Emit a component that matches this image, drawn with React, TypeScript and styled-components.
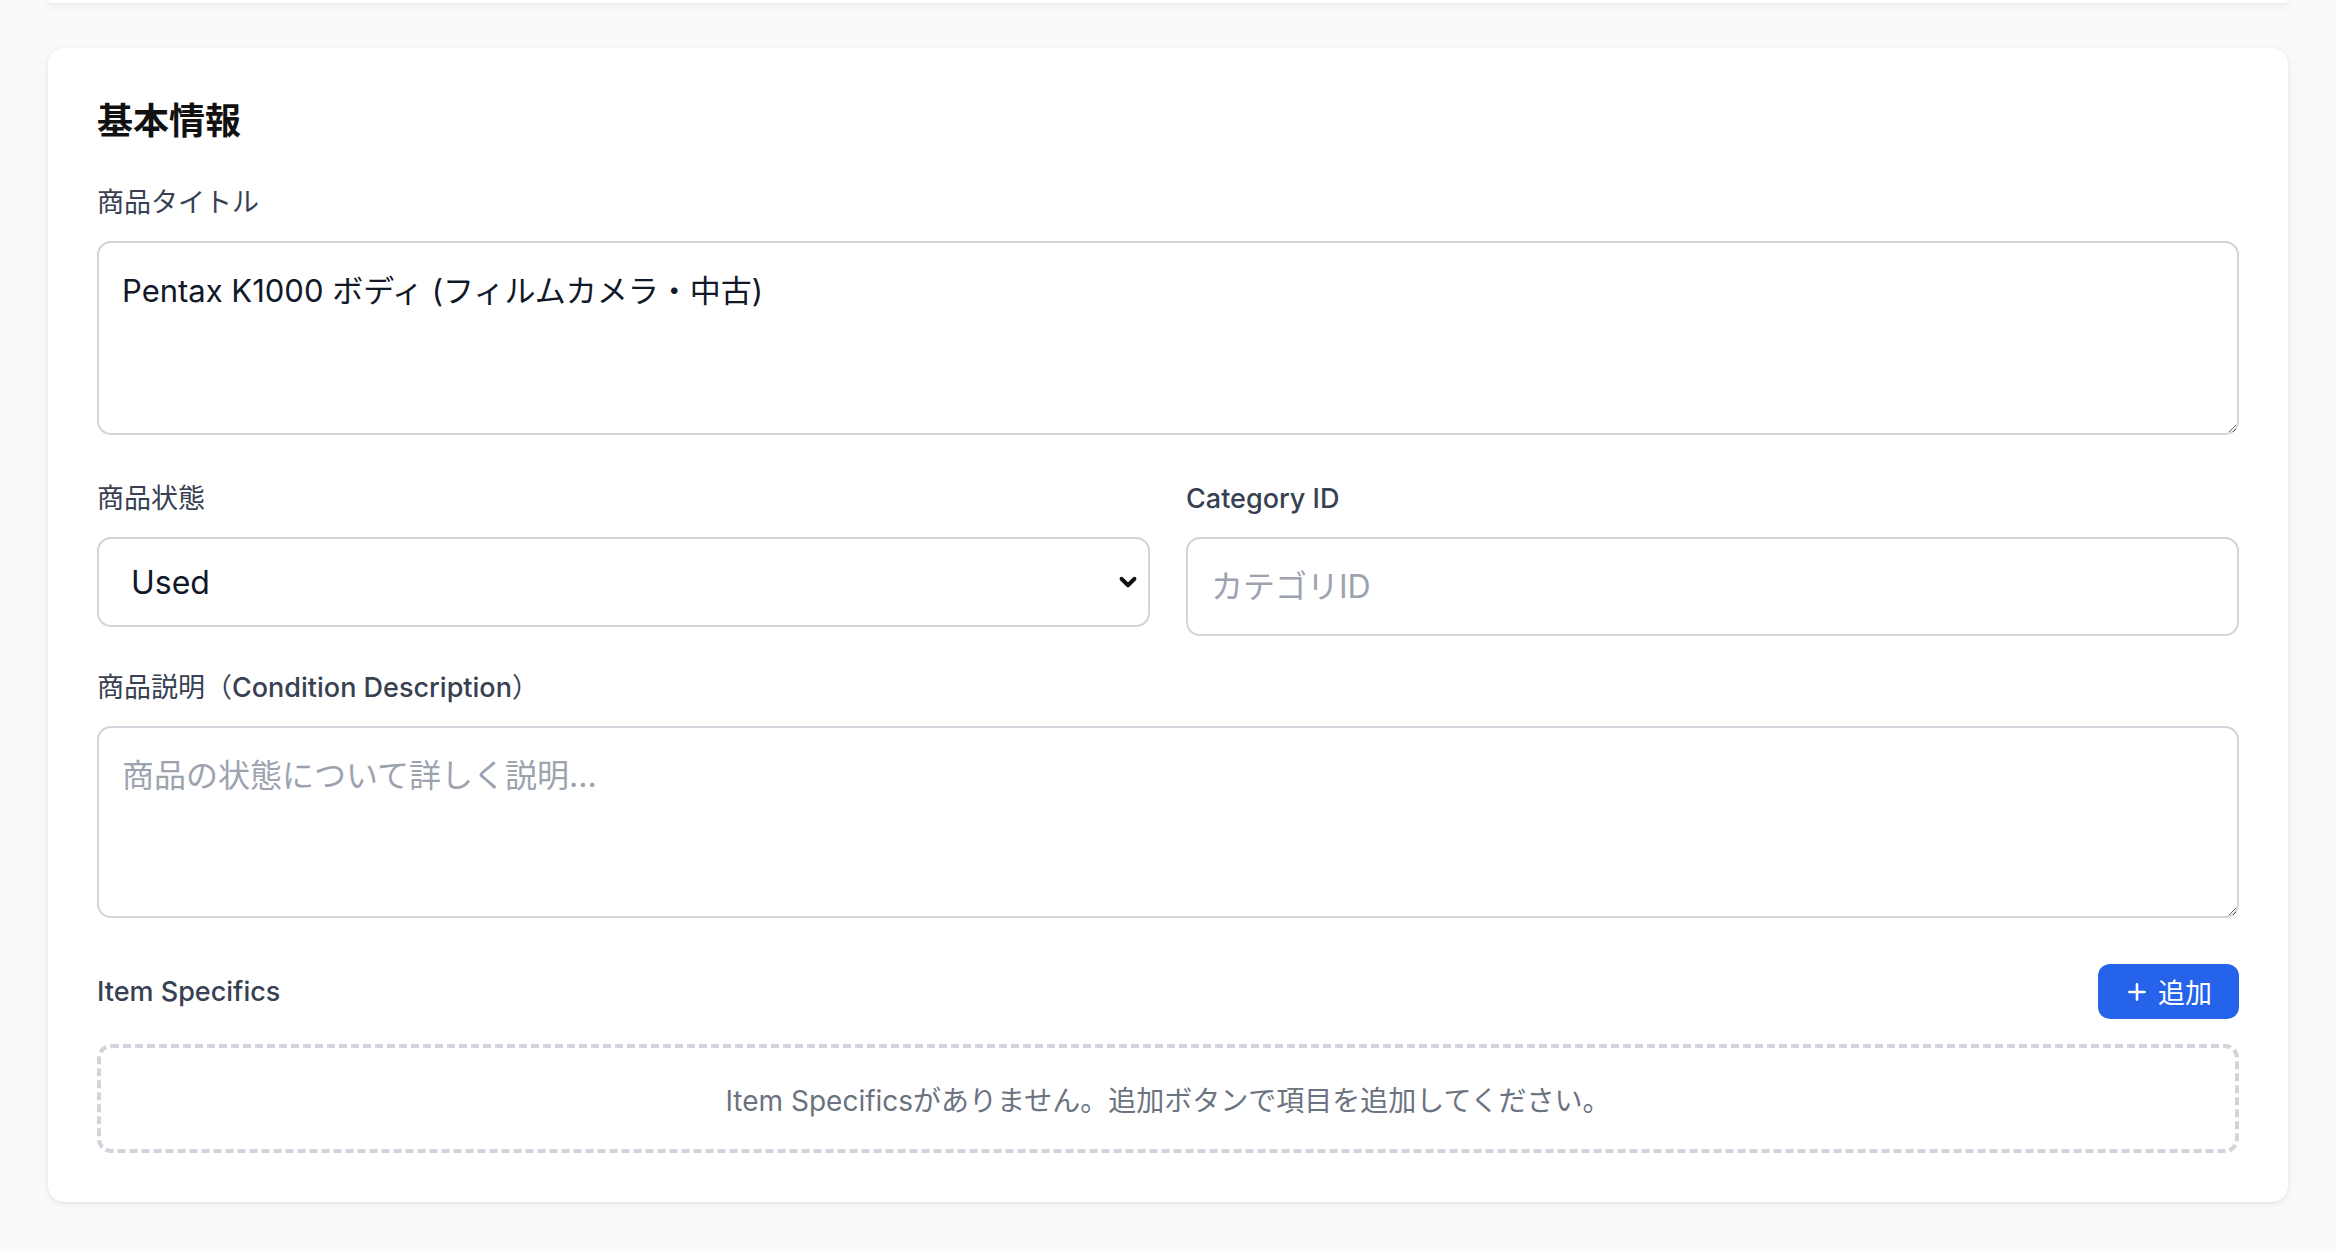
import styled, { createGlobalStyle } from "styled-components";
import { ChevronDown, Plus } from "lucide-react";

const GlobalStyle = createGlobalStyle`
  html, body {
    margin: 0;
    padding: 0;
    background: #f9fafb;
    font-family: "Inter", "Noto Sans CJK JP", sans-serif;
    color: #111827;
  }
  * {
    box-sizing: border-box;
  }
`;

const Page = styled.div`
  min-height: 100vh;
  padding: 0 48px 48px;
  display: flex;
  flex-direction: column;
`;

/* 上にスクロールで隠れている前のカードの下端 */
const PrevCardEdge = styled.div`
  height: 3px;
  margin-bottom: 45px;
  background: #ffffff;
  border-radius: 0 0 16px 16px;
  box-shadow: 0 3px 8px rgba(0, 0, 0, 0.1), 0 1px 3px rgba(0, 0, 0, 0.06);
`;

const Card = styled.section`
  background: #ffffff;
  border-radius: 16px;
  padding: 49px 49px 49px;
  box-shadow: 0 2px 8px rgba(0, 0, 0, 0.07), 0 1px 3px rgba(0, 0, 0, 0.06);
  display: flex;
  flex-direction: column;
`;

const Heading = styled.h2`
  margin: 0;
  font-size: 36px;
  line-height: 48px;
  font-weight: 700;
  color: #111111;
`;

const Field = styled.div<{ $top: number }>`
  display: flex;
  flex-direction: column;
  gap: 18px;
  margin-top: ${(p) => p.$top}px;
  min-width: 0;
`;

const Label = styled.label`
  font-size: 27px;
  line-height: 40px;
  font-weight: 400;
  color: #374151;
`;

/* 欧文部分だけ少し太く（和文は細いまま） */
const Latin = styled.span`
  font-weight: 500;
`;

const TwoColumns = styled.div<{ $top: number }>`
  display: grid;
  grid-template-columns: 1fr 1fr;
  gap: 36px;
  margin-top: ${(p) => p.$top}px;
  align-items: start;
`;

const TextArea = styled.textarea<{ $height: number }>`
  display: block;
  width: 100%;
  height: ${(p) => p.$height}px;
  padding: 24px 23px;
  border: 2px solid #d1d5db;
  border-radius: 14px;
  font-family: inherit;
  font-size: 31px;
  line-height: 48px;
  color: #111827;
  background: #ffffff;
  outline: none;
  resize: vertical;

  &::placeholder {
    color: #9ca3af;
    font-size: 32px;
  }
`;

const TextInput = styled.input`
  display: block;
  width: 100%;
  height: 99px;
  padding: 0 23px;
  border: 2px solid #d1d5db;
  border-radius: 14px;
  font-family: inherit;
  font-size: 32px;
  color: #111827;
  background: #ffffff;
  outline: none;

  &::placeholder {
    color: #9ca3af;
  }
`;

const SelectWrap = styled.div`
  position: relative;
`;

const Select = styled.select`
  display: block;
  width: 100%;
  height: 90px;
  padding: 0 60px 0 32px;
  border: 2px solid #d1d5db;
  border-radius: 14px;
  font-family: inherit;
  font-size: 32px;
  color: #111827;
  background: #ffffff;
  appearance: none;
  outline: none;
`;

const SelectArrow = styled.span`
  position: absolute;
  right: 9px;
  top: 50%;
  transform: translateY(-50%);
  display: flex;
  pointer-events: none;
  color: #111111;
`;

const SpecHeader = styled.div`
  display: flex;
  align-items: center;
  justify-content: space-between;
  margin-top: 46px;
`;

const AddButton = styled.button`
  display: flex;
  align-items: center;
  gap: 8px;
  height: 55px;
  padding: 0 27px 0 26px;
  border: none;
  border-radius: 12px;
  background: #2563eb;
  color: #ffffff;
  font-family: inherit;
  font-size: 27px;
  font-weight: 400;
  cursor: pointer;
`;

const EmptyBox = styled.div`
  margin-top: 25px;
  height: 109px;
  border: 4px dashed #d1d5db;
  border-radius: 14px;
  display: flex;
  align-items: center;
  justify-content: center;
  font-size: 28px;
  color: #6b7280;
`;

const App = () => {
  return (
    <>
      <GlobalStyle />
      <Page>
        <PrevCardEdge />
        <Card>
          <Heading>基本情報</Heading>

          <Field $top={38}>
            <Label>商品タイトル</Label>
            <TextArea
              $height={194}
              defaultValue="Pentax K1000 ボディ (フィルムカメラ・中古)"
            />
          </Field>

          <TwoColumns $top={44}>
            <Field $top={0}>
              <Label>商品状態</Label>
              <SelectWrap>
                <Select defaultValue="Used">
                  <option value="New">New</option>
                  <option value="Used">Used</option>
                </Select>
                <SelectArrow>
                  <ChevronDown size={26} strokeWidth={3.6} />
                </SelectArrow>
              </SelectWrap>
            </Field>
            <Field $top={0}>
              <Label>
                <Latin>Category ID</Latin>
              </Label>
              <TextInput placeholder="カテゴリID" />
            </Field>
          </TwoColumns>

          <Field $top={32}>
            <Label>
              商品説明（<Latin>Condition Description</Latin>）
            </Label>
            <TextArea $height={192} placeholder="商品の状態について詳しく説明..." />
          </Field>

          <SpecHeader>
            <Label>
              <Latin>Item Specifics</Latin>
            </Label>
            <AddButton type="button">
              <Plus size={26} strokeWidth={2.4} />
              追加
            </AddButton>
          </SpecHeader>

          <EmptyBox>Item Specificsがありません。追加ボタンで項目を追加してください。</EmptyBox>
        </Card>
      </Page>
    </>
  );
};

export default App;
